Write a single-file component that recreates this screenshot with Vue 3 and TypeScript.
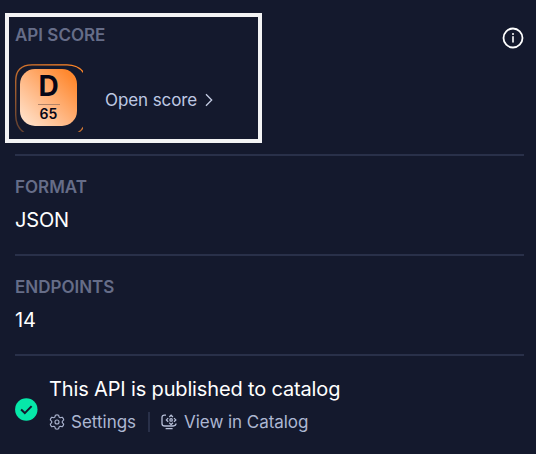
<script setup lang="ts">
interface Detail {
  label: string
  value: string
}

const score = { grade: 'D', points: 65 }
const details: Detail[] = [
  { label: 'FORMAT', value: 'JSON' },
  { label: 'ENDPOINTS', value: '14' },
]
</script>

<template>
  <main class="panel">
    <div class="highlight"></div>

    <section class="score">
      <header class="score-head">
        <h2 class="label score-label">API SCORE</h2>
        <button class="info" aria-label="Info">
          <svg width="22" height="22" viewBox="0 0 22 22" fill="none">
            <circle cx="11" cy="11" r="9.5" stroke="#fff" stroke-width="1.8" />
            <path d="M11 9.7V15" stroke="#fff" stroke-width="1.6" stroke-linecap="round" />
            <circle cx="11" cy="6.9" r="1" fill="#fff" />
          </svg>
        </button>
      </header>
      <div class="score-row">
        <div class="badge">
          <svg class="ring" width="68" height="68" viewBox="0 0 68 68" fill="none">
            <defs>
              <linearGradient id="ring-stroke" x1="0" y1="68" x2="55" y2="0" gradientUnits="userSpaceOnUse">
                <stop offset="0" stop-color="#ff8d35" stop-opacity=".3" />
                <stop offset=".9" stop-color="#ff8526" />
              </linearGradient>
              <linearGradient id="ring-end" x1="62" y1="68" x2="69" y2="62" gradientUnits="userSpaceOnUse">
                <stop offset="0" stop-color="#a6602f" />
                <stop offset="1" stop-color="#e98335" />
              </linearGradient>
            </defs>
            <path d="M9 68.5Q.7 63 .7 51V17Q.7.9 17 .9H52Q63 .9 68.5 8.5" stroke="url(#ring-stroke)" stroke-width="1.4" />
            <path d="M63 68.5Q66.5 66.5 68.5 63" stroke="url(#ring-end)" stroke-width="1.4" />
          </svg>
          <div class="tile">
            <span class="grade">{{ score.grade }}</span>
            <span class="points">{{ score.points }}</span>
          </div>
        </div>
        <a class="open">
          <span>Open score</span>
          <svg width="8" height="14" viewBox="0 0 8 14" fill="none">
            <path d="M1 1.2L6.7 7L1 12.8" stroke="#c5cde4" stroke-width="1.3" />
          </svg>
        </a>
      </div>
    </section>

    <section v-for="item in details" :key="item.label" class="detail">
      <h2 class="label">{{ item.label }}</h2>
      <p class="value">{{ item.value }}</p>
    </section>

    <section class="publish">
      <svg class="check" width="23" height="23" viewBox="0 0 23 23" fill="none">
        <circle cx="11.3" cy="11.5" r="11.2" fill="#06e8a9" />
        <path d="M6.1 11.6L9.8 15.1L16.6 8.1" stroke="#14192d" stroke-width="2" />
      </svg>
      <div>
        <p class="status">This API is published to catalog</p>
        <nav class="links">
          <a class="link">
            <svg width="16" height="16" viewBox="0 0 16 16" fill="none" stroke="#a9b2cd" stroke-width="1.15" stroke-linejoin="round">
              <path d="M6.4 1.2Q8 .5 9.6 1.2L10.1 3.1L11.2 3.7L13.1 3.2Q14.5 4.2 14.7 5.9L13.3 7.3V8.7L14.7 10.1Q14.5 11.8 13.1 12.8L11.2 12.3L10.1 12.9L9.6 14.8Q8 15.5 6.4 14.8L5.9 12.9L4.8 12.3L2.9 12.8Q1.5 11.8 1.3 10.1L2.7 8.7V7.3L1.3 5.9Q1.5 4.2 2.9 3.2L4.8 3.7L5.9 3.1Z" />
              <circle cx="8" cy="8" r="2" />
            </svg>
            <span>Settings</span>
          </a>
          <span class="split"></span>
          <a class="link catalog">
            <svg width="16" height="16" viewBox="0 0 16 16" fill="none" stroke="#b6bed7" stroke-width="1.3">
              <path d="M5 1.2H3.4Q1 1.2 1 3.6V9.4Q1 12 3.8 12H12.2Q15 12 15 9.6" />
              <path d="M4.6 14.6H11.6" />
              <path d="M8.3 3L10.1 1.2L11.9 3M8.3 8.8L10.1 10.6L11.9 8.8M7.2 4.1L5.4 5.9L7.2 7.7M13 4.1L14.8 5.9L13 7.7" />
              <circle cx="10.1" cy="5.9" r="1.2" />
            </svg>
            <span>View in Catalog</span>
          </a>
        </nav>
      </div>
    </section>
  </main>
</template>

<style>
body {
  background: #14192d;
}
</style>

<style scoped>
.panel {
  position: relative;
  box-sizing: border-box;
  width: 536px;
  height: 454px;
  padding: 0 12px 0 15px;
  overflow: hidden;
  background: #14192d;
  color: #fff;
  font-family: Inter, "Liberation Sans", sans-serif;
}

h2,
p {
  margin: 0;
}

.highlight {
  position: absolute;
  left: 5px;
  top: 13px;
  box-sizing: border-box;
  width: 257px;
  height: 130px;
  border: 4px solid #f3f3f4;
  pointer-events: none;
}

.score,
.detail {
  box-sizing: border-box;
  border-bottom: 2px solid #293049;
}

.score {
  height: 156px;
  padding-top: 25px;
}

.score-head {
  display: flex;
  justify-content: space-between;
  height: 39px;
}

.label {
  color: #666d88;
  font-size: 17px;
  font-weight: 600;
  line-height: 20px;
}

.info {
  width: 22px;
  height: 22px;
  margin-top: 2px;
  padding: 0;
  border: 0;
  background: none;
}

.info svg,
.ring {
  display: block;
}

.score-row {
  display: flex;
  align-items: center;
  gap: 22px;
}

.badge {
  display: grid;
  width: 68px;
  height: 68px;
}

.ring,
.tile {
  grid-area: 1 / 1;
}

.tile {
  display: flex;
  flex-direction: column;
  align-items: center;
  box-sizing: border-box;
  width: 57px;
  height: 57px;
  margin: 5px;
  border-radius: 15px;
  background: linear-gradient(45deg, #ffe2cb 5%, #ffb783 45%, #ff8930 88%);
  color: #050617;
}

.grade {
  width: 22px;
  height: 36px;
  border-bottom: 1px solid #b38468;
  box-sizing: border-box;
  font-size: 28px;
  font-weight: 700;
  line-height: 34px;
  text-align: center;
}

.points {
  font-size: 14px;
  font-weight: 600;
  letter-spacing: 0.2px;
  line-height: 17px;
}

.open {
  display: flex;
  align-items: center;
  gap: 8px;
  padding-top: 4px;
  color: #bec8e3;
  font-size: 17px;
  letter-spacing: -0.1px;
  line-height: 22px;
}

.detail {
  height: 100px;
  padding-top: 21px;
}

.value {
  margin-top: 11px;
  font-size: 20px;
  letter-spacing: -0.15px;
  line-height: 24px;
}

.publish {
  display: flex;
  gap: 11px;
  padding-top: 21px;
}

.check {
  flex: none;
  margin-top: 21px;
}

.status {
  font-size: 20px;
  letter-spacing: -0.15px;
  line-height: 24px;
}

.links {
  display: flex;
  align-items: center;
  margin-top: 10px;
  color: #adb7d2;
  font-size: 17px;
  line-height: 22px;
}

.link {
  display: flex;
  align-items: center;
  gap: 6px;
}

.catalog {
  gap: 7px;
  letter-spacing: -0.05px;
}

.split {
  width: 2px;
  height: 20px;
  margin: 0 11px 0 12px;
  background: #293049;
}
</style>
